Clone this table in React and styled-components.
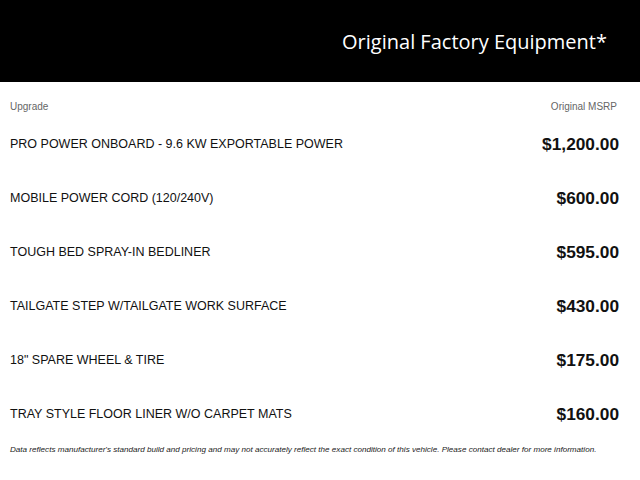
import React from "react";
import styled, { createGlobalStyle } from "styled-components";

const Global = createGlobalStyle`
  html, body { margin: 0; padding: 0; background: #fff; }
  body { font-family: "Liberation Sans", Arial, sans-serif; color: #111; }
`;

const Page = styled.div`
  width: 640px;
  height: 480px;
  display: flex;
  flex-direction: column;
  background: #fff;
`;

const Header = styled.header`
  height: 82px;
  background: #000;
  display: flex;
  align-items: center;
  justify-content: flex-end;
  padding-right: 33px;
  box-sizing: border-box;
`;

const Title = styled.h1`
  margin: 0;
  color: #fff;
  font-family: "Open Sans", sans-serif;
  font-weight: 400;
  font-size: 20px;
  letter-spacing: 0;
`;

const Body = styled.div`
  padding: 18px 21px 0 10px;
  display: flex;
  flex-direction: column;
`;

const ColHead = styled.div`
  display: flex;
  justify-content: space-between;
  height: 14px;
  line-height: 14px;
  font-size: 10px;
  color: #666;
  margin-bottom: 3px;
  padding-right: 2px;
`;

const Row = styled.div`
  display: flex;
  justify-content: space-between;
  align-items: center;
  height: 54px;
`;

const Item = styled.span`
  font-size: 12.5px;
  color: #111;
`;

const Price = styled.span`
  font-size: 17.3px;
  font-weight: 700;
  color: #111;
`;

const Note = styled.p`
  margin: 3px 0 0;
  font-size: 8.1px;
  line-height: 12px;
  font-style: italic;
  color: #222;
`;

const items = [
  ["PRO POWER ONBOARD - 9.6 KW EXPORTABLE POWER", "$1,200.00"],
  ["MOBILE POWER CORD (120/240V)", "$600.00"],
  ["TOUGH BED SPRAY-IN BEDLINER", "$595.00"],
  ["TAILGATE STEP W/TAILGATE WORK SURFACE", "$430.00"],
  ['18" SPARE WHEEL & TIRE', "$175.00"],
  ["TRAY STYLE FLOOR LINER W/O CARPET MATS", "$160.00"],
];

export default function App() {
  return (
    <Page>
      <Global />
      <Header>
        <Title>Original Factory Equipment*</Title>
      </Header>
      <Body>
        <ColHead>
          <span>Upgrade</span>
          <span>Original MSRP</span>
        </ColHead>
        {items.map(([name, price]) => (
          <Row key={name}>
            <Item>{name}</Item>
            <Price>{price}</Price>
          </Row>
        ))}
        <Note>
          Data reflects manufacturer's standard build and pricing and may not accurately reflect the exact condition of this vehicle. Please contact dealer for more information.
        </Note>
      </Body>
    </Page>
  );
}
